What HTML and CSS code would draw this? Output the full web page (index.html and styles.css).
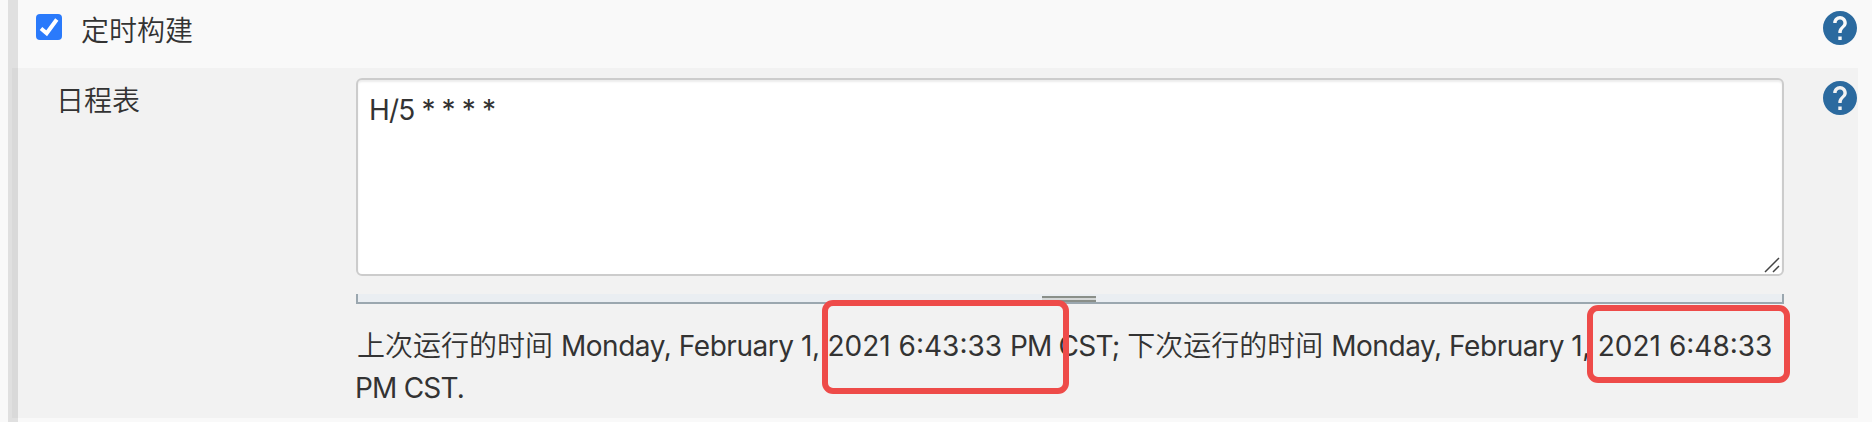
FILE: index.html
```html
<!DOCTYPE html>
<html lang="zh-CN">
<head>
<meta charset="utf-8">
<title>定时构建</title>
<link rel="stylesheet" href="styles.css">
</head>
<body>
<main class="section">
  <div class="trigger">
    <span class="checkbox"><svg viewBox="0 0 26 26"><path d="M5 14.500 10.700 19.300 20.800 5.500" fill="none" stroke="#fff" stroke-width="4"/></svg></span>
    <span class="trigger-label">定时构建</span>
    <svg class="help" viewBox="2 2 20 20"><path d="M12 2C6.480 2 2 6.480 2 12s4.480 10 10 10 10-4.480 10-10S17.520 2 12 2zm1 17h-2v-2h2v2zm2.070-7.750-.9.920C13.450 12.900 13 13.500 13 15h-2v-.5c0-1.100.45-2.100 1.170-2.830l1.240-1.260c.370-.360.590-.860.590-1.410 0-1.100-.9-2-2-2s-2 .9-2 2H8c0-2.210 1.790-4 4-4s4 1.790 4 4c0 .880-.360 1.680-.930 2.250z"/></svg>
  </div>
  <div class="schedule">
    <div class="schedule-label">日程表</div>
    <div class="field">
      <div class="editor">H/5 * * * *<svg class="resize" viewBox="0 0 16 16"><path d="M1 15 15 1M9 15 15 9"/></svg></div>
      <div class="handle"><span class="grip"></span></div>
      <p class="runs"><span class="line"><span class="cjk first">上次运行的时间</span> <span class="date">Monday, February 1,</span> <span class="time">2021 6:43:33</span> <span class="zone">PM CST;</span> <span class="cjk">下次运行的时间</span> <span class="date">Monday, February 1,</span> <span class="time">2021 6:48:33</span></span> <span class="line zone">PM CST.</span></p>
      <span class="mark mark-last"></span>
      <span class="mark mark-next"></span>
    </div>
    <svg class="help" viewBox="2 2 20 20"><path d="M12 2C6.480 2 2 6.480 2 12s4.480 10 10 10 10-4.480 10-10S17.520 2 12 2zm1 17h-2v-2h2v2zm2.070-7.750-.9.920C13.450 12.900 13 13.500 13 15h-2v-.5c0-1.100.45-2.100 1.170-2.830l1.240-1.260c.370-.360.590-.860.590-1.410 0-1.100-.9-2-2-2s-2 .9-2 2H8c0-2.210 1.790-4 4-4s4 1.790 4 4c0 .880-.360 1.680-.930 2.250z"/></svg>
  </div>
</main>
</body>
</html>
```
FILE: styles.css
```css
* { box-sizing: border-box; }
body {
  margin: 0;
  height: 422px;
  overflow: hidden;
  background: #f9f9f9;
  color: #333;
  font: 28px/42px Inter, "Noto Sans CJK SC", sans-serif;
}
.section {
  height: 422px;
  padding: 0 14px 0 12px;
  background: linear-gradient(#e0e0e0, #e0e0e0) 8px 0 / 10px 100% no-repeat;
}
.trigger {
  display: flex;
  align-items: flex-start;
  height: 68px;
  padding: 11px 1px 0 24px;
}
.checkbox {
  width: 26px;
  height: 26px;
  margin-top: 3px;
  border-radius: 4px;
  background: #2a7afb;
}
.checkbox svg { display: block; }
.trigger-label {
  margin-left: 19px;
  font-weight: 350;
  line-height: 40px;
}
.help {
  width: 34px;
  height: 34px;
  margin-left: auto;
  fill: #2b6a9f;
  flex: none;
}
.schedule {
  display: flex;
  height: 350px;
  padding: 10px 1px 0 43px;
  background: rgba(0, 0, 0, 0.028);
}
.schedule .help { margin-top: 3px; }
.schedule-label {
  width: 301px;
  padding-left: 1px;
  font-weight: 350;
  line-height: 46px;
}
.field {
  position: relative;
  width: 1428px;
}
.editor {
  position: relative;
  height: 198px;
  padding: 9px 11px;
  border: 2px solid #ccc;
  border-radius: 6px;
  background: #fff;
  box-shadow: inset 0 2px 2px rgba(0, 0, 0, 0.075);
  letter-spacing: -0.85px;
}
.resize {
  position: absolute;
  right: 2px;
  bottom: 1px;
  width: 16px;
  height: 16px;
  fill: none;
  stroke: #444;
  stroke-width: 1.5;
}
.handle {
  display: flex;
  justify-content: center;
  height: 10px;
  margin-top: 18px;
  padding: 2px 2px 0 0;
  border: solid #9ba7af;
  border-width: 0 2px 2px;
  background: #eaeef2;
}
.grip {
  width: 54px;
  height: 6px;
  border: solid #8a8f89;
  border-width: 2px 0;
  background: #d5d8d8;
}
.runs {
  margin: 21px 0 0;
}
.line {
  display: block;
  white-space: nowrap;
}
.cjk { font-weight: 350; }
.first { margin-left: 1px; }
.date { letter-spacing: -0.45px; }
.time { letter-spacing: 0; }
.zone { letter-spacing: -0.8px; }
.line.zone { margin-left: -1px; }
.mark {
  position: absolute;
  border: 6px solid #ee4b49;
  border-radius: 11px;
}
.mark-last { left: 466px; top: 222px; width: 247px; height: 94px; }
.mark-next { left: 1231px; top: 227px; width: 203px; height: 78px; }
```
